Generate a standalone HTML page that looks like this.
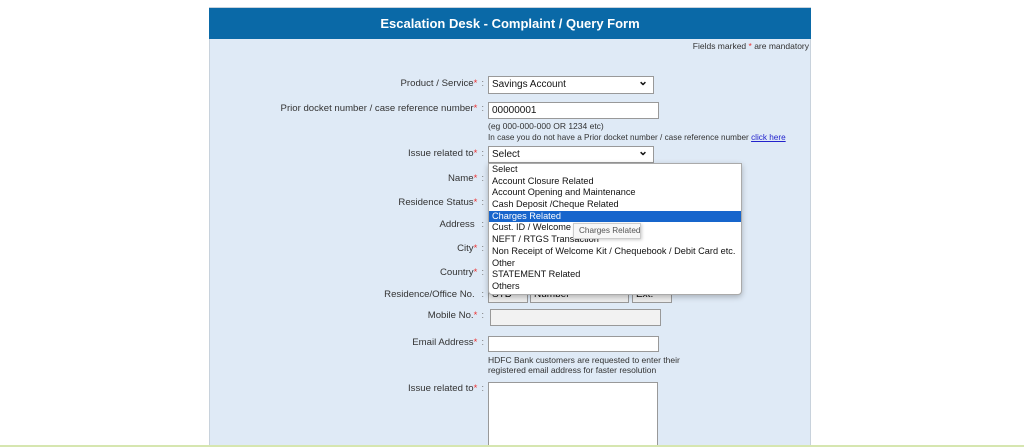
<!DOCTYPE html>
<html><head><style>
html,body{margin:0;width:1024px;height:447px;overflow:hidden;}
body{background:#fff;position:relative;font-family:"Liberation Sans",Arial,sans-serif;}
.a{position:absolute;}
.panel{left:209px;top:7px;width:602px;height:440px;background:#dfeaf6;border:1px solid #c8d2dc;box-sizing:border-box;}
.hdr{left:209px;top:8px;width:602px;height:31px;background:#0a69a7;color:#fff;font-weight:bold;font-size:13px;text-align:center;line-height:31px;}
.lbl{right:540px;font-size:9.6px;color:#333;white-space:nowrap;}
.lbl i{color:#e33;font-style:normal;}
.lbl b{font-weight:normal;color:#777;margin-left:4px;}
.box{background:#fff;border:1px solid #999;box-sizing:border-box;font-size:10px;color:#111;padding-left:3px;line-height:16px;}
.sel:after{content:"⌄";position:absolute;right:5px;top:-4px;font-size:12px;font-weight:bold;}
.small{font-size:8.5px;color:#333;white-space:nowrap;}
.dd{left:488px;top:163px;width:252px;height:130px;background:#fff;border:1px solid #aaa;border-radius:0 0 4px 4px;box-shadow:0 2px 6px rgba(0,0,0,.25);font-size:9.2px;color:#111;overflow:hidden;}
.dd div{height:11.7px;line-height:11.7px;padding-left:3px;white-space:nowrap;}
.dd .h{background:#1765cc;color:#fff;}
.gray{background:#eee;border:1px solid #999;box-sizing:border-box;font-size:10px;padding-left:3px;line-height:15px;}
</style></head><body>
<div class="a panel"></div>
<div class="a hdr">Escalation Desk - Complaint / Query Form</div>
<div class="a small" style="right:215px;top:41px;">Fields marked <span style="color:#e33">*</span> are mandatory</div>

<div class="a lbl" style="top:78px">Product / Service<i>*</i><b>:</b></div>
<div class="a box sel" style="left:488px;top:76px;width:166px;height:18px;">Savings Account</div>
<div class="a lbl" style="top:103px">Prior docket number / case reference number<i>*</i><b>:</b></div>
<div class="a box" style="left:488px;top:102px;width:171px;height:17px;">00000001</div>
<div class="a small" style="left:488px;top:121px">(eg 000-000-000 OR 1234 etc)</div>
<div class="a small" style="left:488px;top:133px;font-size:8.2px">In case you do not have a Prior docket number / case reference number <span style="color:#22c;text-decoration:underline">click here</span></div>
<div class="a lbl" style="top:148px">Issue related to<i>*</i><b>:</b></div>
<div class="a box sel" style="left:488px;top:146px;width:166px;height:17px;">Select</div>

<div class="a lbl" style="top:173px">Name<i>*</i><b>:</b></div>
<div class="a lbl" style="top:197px">Residence Status<i>*</i><b>:</b></div>
<div class="a lbl" style="top:219px">Address <b>:</b></div>
<div class="a lbl" style="top:243px">City<i>*</i><b>:</b></div>
<div class="a lbl" style="top:267px">Country<i>*</i><b>:</b></div>
<div class="a lbl" style="top:289px">Residence/Office No. <b>:</b></div>
<div class="a gray" style="left:488px;top:286px;width:40px;height:17px;">STD</div>
<div class="a gray" style="left:530px;top:286px;width:99px;height:17px;">Number</div>
<div class="a gray" style="left:632px;top:286px;width:40px;height:17px;">Ext.</div>

<div class="a dd">
<div>Select</div><div>Account Closure Related</div><div>Account Opening and Maintenance</div><div>Cash Deposit /Cheque Related</div><div class="h">Charges Related</div><div>Cust. ID / Welcome Kit Related</div><div>NEFT / RTGS Transaction</div><div>Non Receipt of Welcome Kit / Chequebook / Debit Card etc.</div><div>Other</div><div>STATEMENT Related</div><div>Others</div>
</div>
<div class="a" style="left:573px;top:223px;width:68px;height:16px;background:#f7f7f7;border:1px solid #ccc;box-sizing:border-box;font-size:8.2px;color:#555;line-height:14px;padding-left:5px;white-space:nowrap;overflow:hidden;box-shadow:1px 1px 3px rgba(0,0,0,.2)">Charges Related</div>

<div class="a lbl" style="top:310px">Mobile No.<i>*</i><b>:</b></div>
<div class="a gray" style="left:490px;top:309px;width:171px;height:17px;background:#f2f2f2"></div>
<div class="a lbl" style="top:337px">Email Address<i>*</i><b>:</b></div>
<div class="a box" style="left:488px;top:336px;width:171px;height:16px;"></div>
<div class="a small" style="left:488px;top:355px;line-height:10px">HDFC Bank customers are requested to enter their<br>registered email address for faster resolution</div>
<div class="a lbl" style="top:383px">Issue related to<i>*</i><b>:</b></div>
<div class="a box" style="left:488px;top:382px;width:170px;height:65px;border-bottom:none"></div>
<div class="a" style="left:0;top:445px;width:1024px;height:2px;background:#d6e6b0"></div>
</body></html>
